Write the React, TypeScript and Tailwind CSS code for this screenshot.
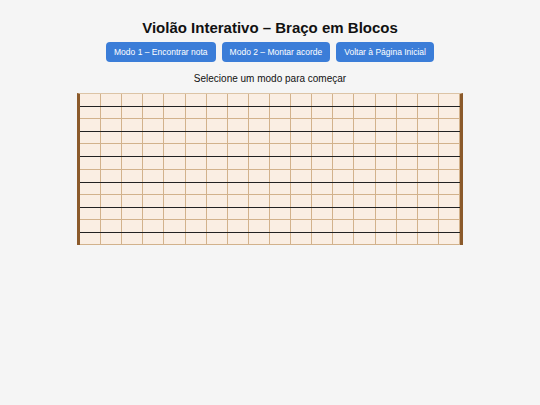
import React, { useState } from "react";

const STRINGS = 6;
const FRETS = 18;

const modes = [
  { id: 1, label: "Modo 1 – Encontrar nota" },
  { id: 2, label: "Modo 2 – Montar acorde" },
];

const App = () => {
  const [mode, setMode] = useState<number | null>(null);

  return (
    <div className="min-h-screen bg-[#f5f5f5] font-['Liberation_Sans',Arial,sans-serif] text-[#111]">
      <div className="flex flex-col items-center pt-[19px]">
        <h1 className="text-[15px] leading-[18px] font-bold">Violão Interativo – Braço em Blocos</h1>

        <div className="mt-[5px] flex gap-[6px]">
          {modes.map((m) => (
            <button
              key={m.id}
              onClick={() => setMode(m.id)}
              className="h-[20px] px-[8px] rounded-[4px] bg-[#3b7dd8] text-white text-[8.5px] leading-none"
            >
              {m.label}
            </button>
          ))}
          <button className="h-[20px] px-[8px] rounded-[4px] bg-[#3b7dd8] text-white text-[8.5px] leading-none">
            Voltar à Página Inicial
          </button>
        </div>

        <p className="mt-[11px] text-[10px] leading-[12px]">
          {mode === null ? "Selecione um modo para começar" : `Modo ${mode} ativo`}
        </p>

        {/* braço do violão: 6 cordas x 18 casas */}
        <div className="mt-[8px] border-x-[3px] border-[#8b5a2b] border-t border-t-[#dcc4a6]">
          {Array.from({ length: STRINGS }).map((_, s) => (
            <div key={s} className="relative flex w-[380px]">
              {Array.from({ length: FRETS }).map((_, f) => (
                <div
                  key={f}
                  className="h-[25.2px] flex-1 bg-[#faeee3] border-b border-[#d2b28c] [&:not(:last-child)]:border-r"
                />
              ))}
              <div className="absolute left-0 right-0 top-[12px] h-px bg-[#222]" />
            </div>
          ))}
        </div>
      </div>
    </div>
  );
};

export default App;
